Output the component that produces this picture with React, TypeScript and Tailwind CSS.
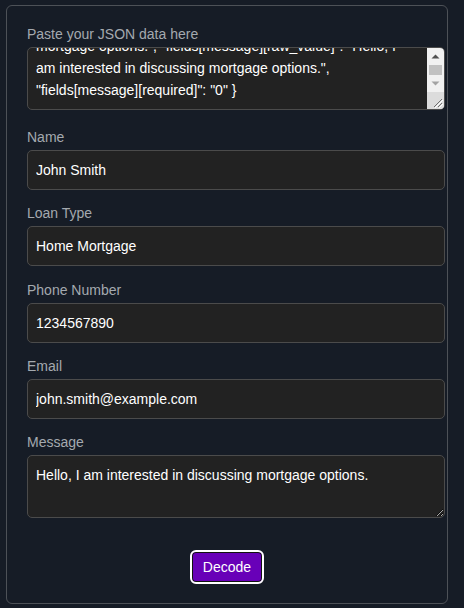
import { useEffect, useRef } from "react";

const json =
  '{ "fields[name][id]": "name", "fields[name][type]": "text", "fields[name][title]": "Name", "fields[name][value]": "John Smith", "fields[name][raw_value]": "John Smith", "fields[name][required]": "1", "fields[loan_type][id]": "loan_type", "fields[loan_type][value]": "Home Mortgage", "fields[phone][value]": "1234567890", "fields[email][value]": "john.smith@example.com", "fields[message][id]": "message", "fields[message][value]": "Hello, I am interested in discussing\nmortgage options.", "fields[message][raw_value]": "Hello, I am interested in discussing mortgage options.", "fields[message][required]": "0" }';

const fields = [
  { label: "Name", value: "John Smith", gap: "mb-[13px]" },
  { label: "Loan Type", value: "Home Mortgage", gap: "mb-[14px]" },
  { label: "Phone Number", value: "1234567890", gap: "mb-[13px]" },
  { label: "Email", value: "john.smith@example.com", gap: "mb-[13px]" },
];

function FakeScrollbar() {
  return (
    <div className="pointer-events-none absolute top-[1px] right-[1px] bottom-[1px] flex w-[17px] flex-col rounded-tr-[4px] rounded-br-[4px] bg-[#f1f1f1]">
      {/* up */}
      <div className="flex h-[17px] items-center justify-center">
        <svg width="9" height="5" viewBox="0 0 9 5">
          <path d="M0.5 4.5 L4.5 0.5 L8.5 4.5 Z" fill="#505050" />
        </svg>
      </div>
      {/* thumb */}
      <div className="mx-[2px] h-[10px] bg-[#c1c1c1]" />
      {/* down */}
      <div className="flex h-[17px] items-center justify-center">
        <svg width="9" height="5" viewBox="0 0 9 5">
          <path d="M0.5 0.5 L4.5 4.5 L8.5 0.5 Z" fill="#a3a3a3" />
        </svg>
      </div>
      {/* resizer corner */}
      <div className="relative mt-auto h-[17px] rounded-br-[4px] bg-[#dcdcdc]">
        <svg
          className="absolute right-[1px] bottom-[1px]"
          width="10"
          height="10"
          viewBox="0 0 10 10"
        >
          <path d="M9 1 L1 9 M9 5 L5 9" stroke="#6e6e6e" strokeWidth="1" />
          <path d="M10 2 L2 10 M10 6 L6 10" stroke="#ffffff" strokeWidth="1" />
        </svg>
      </div>
    </div>
  );
}

export default function App() {
  const jsonRef = useRef<HTMLTextAreaElement>(null);

  useEffect(() => {
    if (jsonRef.current) {
      jsonRef.current.scrollTop = jsonRef.current.scrollHeight;
    }
  }, []);

  return (
    <div className="min-h-[608px] bg-[#161c26] pt-[5px] pl-[6px] font-['Liberation_Sans',Arial,sans-serif]">
      <div className="flex h-[599px] w-[442px] flex-col rounded-[6px] border border-[#4d5157] pt-[18px] pl-[20px]">
        {/* JSON */}
        <label className="mb-[3px] block text-[14px] leading-[20px] text-[#a4a9af]">
          Paste your JSON data here
        </label>
        <div className="relative mb-[17px] h-[63px] w-[418px]">
          <textarea
            ref={jsonRef}
            readOnly
            defaultValue={json}
            className="block h-[63px] w-[418px] resize-none overflow-hidden rounded-[5px] border border-[#4b4b4b] bg-[#222222] py-[8px] pr-[25px] pl-[8px] text-[14px] leading-[22px] text-white outline-none"
          />
          <FakeScrollbar />
        </div>

        {/* FIELDS */}
        {fields.map((f) => (
          <div key={f.label} className={`flex flex-col ${f.gap}`}>
            <label className="mb-[3px] block text-[14px] leading-[20px] text-[#a4a9af]">
              {f.label}
            </label>
            <input
              readOnly
              value={f.value}
              className="block h-[40px] w-[418px] rounded-[5px] border border-[#4b4b4b] bg-[#222222] px-[8px] text-[14px] text-white outline-none"
            />
          </div>
        ))}

        {/* MESSAGE */}
        <label className="mb-[3px] block text-[14px] leading-[20px] text-[#a4a9af]">
          Message
        </label>
        <textarea
          readOnly
          defaultValue="Hello, I am interested in discussing mortgage options."
          className="block h-[63px] w-[418px] resize-y rounded-[5px] border border-[#4b4b4b] bg-[#222222] px-[8px] py-[8px] text-[14px] leading-[22px] text-white outline-none"
        />

        <div className="mt-[32px] -ml-[20px] flex justify-center">
          <button className="h-[34px] w-[74px] rounded-[6px] border-2 border-white bg-[#6800b8] text-[14px] text-white shadow-[inset_0_0_0_1px_#111]">
            Decode
          </button>
        </div>
      </div>
    </div>
  );
}
